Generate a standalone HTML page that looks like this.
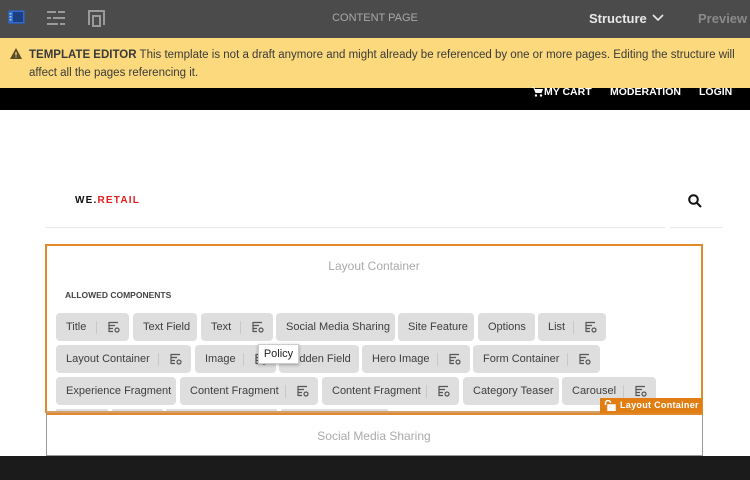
<!DOCTYPE html><html><head><style>
*{margin:0;padding:0;box-sizing:border-box}
body{width:750px;height:480px;overflow:hidden;background:#fff;font-family:"Liberation Sans",sans-serif;position:relative}
.a{position:absolute}
.chip{position:absolute;height:28px;background:#dedede;border-radius:4px;font-size:11px;color:#3e3e3e;line-height:28px;padding-left:10px;white-space:nowrap;overflow:hidden}
.chip .s{position:absolute;top:8px;width:1px;height:13px;background:#c8c8c8}
.chip svg{position:absolute;top:8px}
</style></head><body>
<div class="a" style="left:0;top:0;width:750px;height:38px;background:#4b4b4b"></div>
<svg class="a" style="left:8px;top:10px" width="17" height="15"><rect x="0.5" y="0.5" width="16" height="13" fill="#2d6ad6"/><rect x="5" y="2" width="10" height="10" fill="#1d3f80"/><rect x="1.5" y="3" width="2" height="1.5" fill="#9cc"/><rect x="1.5" y="6" width="2" height="1.5" fill="#9cc"/><rect x="1.5" y="9" width="2" height="1.5" fill="#9cc"/></svg>
<svg class="a" style="left:47px;top:10px" width="18" height="16" stroke="#9a9a9a" stroke-width="2"><path d="M0 2h18M0 8h18M0 14h18"/><path d="M10 0v5M5 6v5M12 12v4" stroke="#4b4b4b" stroke-width="2"/></svg>
<svg class="a" style="left:88px;top:10px" width="17" height="17" fill="none" stroke="#9a9a9a" stroke-width="2"><path d="M1 15V1h15v14"/><rect x="5" y="6" width="7" height="10"/></svg>
<div class="a" style="left:0;width:750px;top:12px;text-align:center;font-size:11px;color:#a8a8a8">CONTENT PAGE</div>
<div class="a" style="left:589px;top:11px;font-size:13px;font-weight:bold;color:#e8e8e8">Structure</div>
<svg class="a" style="left:652px;top:14px" width="12" height="8" fill="none" stroke="#e8e8e8" stroke-width="1.6"><path d="M1 1l5 5 5-5"/></svg>
<div class="a" style="left:698px;top:11px;font-size:13px;font-weight:bold;color:#8a8a8a">Preview</div>
<div class="a" style="left:0;top:38px;width:750px;height:50px;background:#fbd97c"></div>
<svg class="a" style="left:10px;top:48px" width="12" height="11"><path d="M6 0L12 11H0z" fill="#5a4a2a"/><path d="M6 4v3.5M6 8.5v1" stroke="#fbd97c" stroke-width="1.3"/></svg>
<div class="a" style="left:29px;top:46px;width:715px;font-size:11.5px;line-height:18px;color:#3a3a3a"><b>TEMPLATE EDITOR</b> This template is not a draft anymore and might already be referenced by one or more pages. Editing the structure will affect all the pages referencing it.</div>
<div class="a" style="left:0;top:88px;width:750px;height:22px;background:#000"></div>
<svg class="a" style="left:532px;top:87px" width="11" height="10" fill="#fff"><path d="M0 0h2l1 2h8l-1.5 4H3.5L1.5 1H0z"/><circle cx="4" cy="8.5" r="1.2"/><circle cx="9" cy="8.5" r="1.2"/></svg>
<div class="a" style="left:544px;top:86px;font-size:10.5px;font-weight:bold;color:#fff">MY CART</div>
<div class="a" style="left:610px;top:86px;font-size:10.5px;font-weight:bold;color:#fff">MODERATION</div>
<div class="a" style="left:699px;top:86px;font-size:10.5px;font-weight:bold;color:#fff">LOGIN</div>
<div class="a" style="left:75px;top:195px;font-size:10px;font-weight:bold;letter-spacing:1.2px;color:#111">WE.<span style="color:#e1201f">RETAIL</span></div>
<svg class="a" style="left:688px;top:194px" width="14" height="14" fill="none" stroke="#111" stroke-width="2"><circle cx="5.5" cy="5.5" r="4.3"/><path d="M8.5 8.5l4.5 4.5"/></svg>
<div class="a" style="left:46px;top:227px;width:619px;height:1px;background:#e8e8e8"></div>
<div class="a" style="left:670px;top:227px;width:52px;height:1px;background:#e8e8e8"></div>
<div class="a" style="left:45px;top:244px;width:658px;height:169px;border:2px solid #e08a2a;border-bottom:none"></div>
<div class="a" style="left:46px;width:656px;top:259px;text-align:center;font-size:12px;color:#aaa">Layout Container</div>
<div class="a" style="left:65px;top:290px;font-size:8.5px;font-weight:bold;color:#444">ALLOWED COMPONENTS</div>
<div id="chips"></div>
<div class="a" style="left:46px;top:411px;width:656px;height:3px;background:#d0a070"></div>
<div class="a" style="left:46px;top:413px;width:657px;height:43px;border:1px solid #999;border-top:2px solid #e08a2a;background:#fff"></div>
<div class="a" style="left:46px;width:656px;top:429px;text-align:center;font-size:12px;color:#aaa">Social Media Sharing</div>
<div class="a" style="left:600px;top:398px;width:102px;height:15px;background:#e07e14;color:#fff;font-size:9px;font-weight:bold;line-height:15px;padding-left:20px;letter-spacing:0.3px">Layout Container</div>
<svg class="a" style="left:604px;top:400px" width="12" height="11" fill="none" stroke="#fff" stroke-width="1.5"><path d="M1.5 5V3a2.5 2.5 0 0 1 5 0"/><rect x="4" y="5" width="7" height="5.5" fill="#fff"/></svg>
<div class="a" style="left:0;top:456px;width:750px;height:24px;background:#1b1b1b"></div>
<div class="a" style="left:258px;top:344px;width:41px;height:20px;background:#fff;border:1px solid #ccc;box-shadow:0 1px 3px rgba(0,0,0,.3);font-size:11px;line-height:18px;text-align:center;color:#222;z-index:5">Policy</div>
<script>
var rows=[[313,[[56,129,"Title",1],[133,197,"Text Field",0],[201,273,"Text",1],[276,395,"Social Media Sharing",0],[398,474,"Site Feature",0],[478,535,"Options",0],[538,606,"List",1]]],
[345,[[56,191,"Layout Container",1],[195,276,"Image",1],[279,359,"Hidden Field",0],[362,470,"Hero Image",1],[473,600,"Form Container",1]]],
[377,[[56,176,"Experience Fragment",0],[180,318,"Content Fragment",1],[322,459,"Content Fragment",1],[463,559,"Category Teaser",0],[562,656,"Carousel",1]]],
[409,[[56,108,"",0],[112,163,"",0],[166,277,"",0],[281,388,"",0]]]];
var h="";rows.forEach(function(r){r[1].forEach(function(c){var w=c[1]-c[0];h+='<div class="chip" style="left:'+c[0]+'px;top:'+r[0]+'px;width:'+w+'px'+(r[0]==409?';height:3px':'')+'">'+c[2];if(c[3]){h+='<span class="s" style="left:'+(w-33)+'px"></span><svg style="left:'+(w-21)+'px" width="12" height="12" fill="none" stroke="#555" stroke-width="1.2"><path d="M1 1.5h9M1 4.5h6M1 7.5h4M1 10.5h4M1 1v10"/><circle cx="9" cy="9" r="2"/></svg>'}h+='</div>'})});
document.getElementById("chips").innerHTML=h;
</script>
</body></html>
